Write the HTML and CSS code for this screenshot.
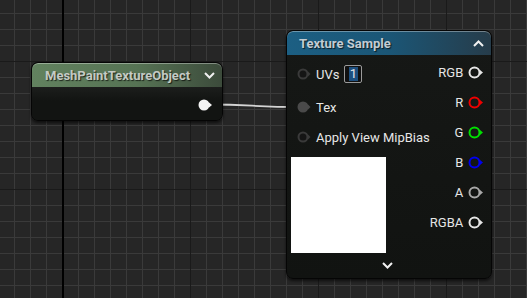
FILE: index.html
```html
<!DOCTYPE html>
<html>
<head>
<meta charset="utf-8">
<link rel="stylesheet" href="styles.css">
</head>
<body>
<div class="canvas">
  <svg class="wire" width="527" height="298" viewBox="0 0 527 298">
    <path d="M209 104.5 C 250 104.5, 255 107, 300 107" stroke="#d4d4d4" stroke-width="1.8" fill="none"/>
  </svg>

  <div class="node node-mesh">
    <div class="node-header header-green">
      <span class="title">MeshPaintTextureObject</span>
      <svg class="chev" width="11" height="7" viewBox="0 0 11 7"><path d="M1 1 L5.5 5.5 L10 1" stroke="#f0f0f0" stroke-width="2" fill="none"/></svg>
    </div>
    <div class="mesh-body">
      <svg class="pin" width="14" height="12" viewBox="0 0 14 12"><circle cx="6" cy="6" r="5.5" fill="#f4f4f4"/><path d="M11 3.5 L14 6 L11 8.5 Z" fill="#f4f4f4"/></svg>
    </div>
  </div>

  <div class="node node-tex">
    <div class="node-header header-blue">
      <span class="title">Texture Sample</span>
      <svg class="chev" width="11" height="7" viewBox="0 0 11 7"><path d="M1 6 L5.5 1.5 L10 6" stroke="#f0f0f0" stroke-width="2" fill="none"/></svg>
    </div>
    <div class="tex-body">
      <div class="inputs">
        <div class="in-row row-uv">
          <svg class="pin" width="14" height="12" viewBox="0 0 14 12"><circle cx="6" cy="6" r="4.5" fill="#151515" stroke="#3a3a3a" stroke-width="2"/><path d="M11 3.5 L13.5 6 L11 8.5 Z" fill="#3a3a3a"/></svg>
          <span class="label">UVs</span>
          <span class="num-box"><span class="sel">1</span></span>
        </div>
        <div class="in-row row-tex">
          <svg class="pin" width="14" height="12" viewBox="0 0 14 12"><circle cx="6" cy="6" r="5.5" fill="#4a4a4a"/><path d="M11 3.5 L13.5 6 L11 8.5 Z" fill="#4a4a4a"/></svg>
          <span class="label">Tex</span>
        </div>
        <div class="in-row row-mip">
          <svg class="pin" width="14" height="12" viewBox="0 0 14 12"><circle cx="6" cy="6" r="4.5" fill="#151515" stroke="#3a3a3a" stroke-width="2"/><path d="M11 3.5 L13.5 6 L11 8.5 Z" fill="#3a3a3a"/></svg>
          <span class="label">Apply View MipBias</span>
        </div>
        <div class="preview"></div>
      </div>
      <div class="outputs">
        <div class="out-row"><span class="label">RGB</span><svg class="pin" width="15" height="13" viewBox="0 0 15 13"><circle cx="6.5" cy="6.5" r="5" fill="none" stroke="#e6e6e6" stroke-width="2"/><path d="M12 4 L15 6.5 L12 9 Z" fill="#e6e6e6"/></svg></div>
        <div class="out-row"><span class="label">R</span><svg class="pin" width="15" height="13" viewBox="0 0 15 13"><circle cx="6.5" cy="6.5" r="5" fill="none" stroke="#f00000" stroke-width="2"/><path d="M12 4 L15 6.5 L12 9 Z" fill="#f00000"/></svg></div>
        <div class="out-row"><span class="label">G</span><svg class="pin" width="15" height="13" viewBox="0 0 15 13"><circle cx="6.5" cy="6.5" r="5" fill="none" stroke="#00e000" stroke-width="2"/><path d="M12 4 L15 6.5 L12 9 Z" fill="#00e000"/></svg></div>
        <div class="out-row"><span class="label">B</span><svg class="pin" width="15" height="13" viewBox="0 0 15 13"><circle cx="6.5" cy="6.5" r="5" fill="none" stroke="#0000f0" stroke-width="2"/><path d="M12 4 L15 6.5 L12 9 Z" fill="#0000f0"/></svg></div>
        <div class="out-row"><span class="label">A</span><svg class="pin" width="15" height="13" viewBox="0 0 15 13"><circle cx="6.5" cy="6.5" r="5" fill="none" stroke="#a8a8a8" stroke-width="2"/><path d="M12 4 L15 6.5 L12 9 Z" fill="#a8a8a8"/></svg></div>
        <div class="out-row"><span class="label">RGBA</span><svg class="pin" width="15" height="13" viewBox="0 0 15 13"><circle cx="6.5" cy="6.5" r="5" fill="none" stroke="#e6e6e6" stroke-width="2"/><path d="M12 4 L15 6.5 L12 9 Z" fill="#e6e6e6"/></svg></div>
      </div>
    </div>
    <div class="tex-foot">
      <svg class="chev" width="11" height="7" viewBox="0 0 11 7"><path d="M1 1 L5.5 5.5 L10 1" stroke="#f0f0f0" stroke-width="2" fill="none"/></svg>
    </div>
  </div>
</div>
</body>
</html>
```

FILE: styles.css
```css
html, body {
  margin: 0;
  padding: 0;
  background: #262626;
}

.canvas {
  position: relative;
  width: 527px;
  height: 298px;
  overflow: hidden;
  font-family: Roboto, "Liberation Sans", sans-serif;
  background-color: #262626;
  background-image:
    linear-gradient(to right, transparent 62px, #000 62px, #000 64px, transparent 64px),
    linear-gradient(to right, #1a1a1a 1px, transparent 1px),
    linear-gradient(to bottom, #1a1a1a 1px, transparent 1px),
    linear-gradient(to right, #3a3a3a 1px, transparent 1px),
    linear-gradient(to bottom, #3a3a3a 1px, transparent 1px);
  background-size:
    100% 100%,
    128px 100%,
    100% 128px,
    16px 100%,
    100% 16px;
  background-position:
    0 0,
    62px 0,
    0 61px,
    14px 0,
    0 13px;
}

.wire {
  position: absolute;
  left: 0;
  top: 0;
}

.node {
  position: absolute;
  box-sizing: border-box;
  border: 1px solid #050505;
  border-radius: 7px;
  background: linear-gradient(to bottom, #161816, #111311);
  box-shadow: 0 2px 3px rgba(0, 0, 0, 0.6);
  overflow: hidden;
}

.node-mesh {
  left: 31px;
  top: 62px;
  width: 192px;
  height: 59px;
}

.node-tex {
  left: 286px;
  top: 30px;
  width: 206px;
  height: 249px;
  display: flex;
  flex-direction: column;
}

.node-header {
  height: 24px;
  display: flex;
  align-items: center;
  justify-content: space-between;
  padding: 0 7px 0 13px;
  box-shadow: inset 0 1px 0 rgba(255, 255, 255, 0.35);
  border-radius: 6px 6px 0 0;
  flex: none;
}

.header-green {
  background: linear-gradient(to right, #62825f 0%, #567354 55%, #3c4b3b 100%);
}

.header-blue {
  background: linear-gradient(to right, #1c5f83 0%, #1b5676 50%, #263c4a 100%);
  padding-left: 12px;
}

.title {
  font-weight: bold;
  font-size: 13px;
  color: #c4cac4;
  text-shadow: 1px 1px 1px rgba(0, 0, 0, 0.7);
  white-space: nowrap;
}

.header-blue .title {
  color: #c3ccd3;
}

.chev {
  display: block;
}

.mesh-body {
  display: flex;
  justify-content: flex-end;
  padding: 12px 10px 0 0;
  background: linear-gradient(to bottom, #1c1e1c, #121412 40%);
  height: 34px;
  box-sizing: border-box;
}

.pin {
  display: block;
  flex: none;
}

.tex-body {
  display: flex;
  justify-content: space-between;
  flex: 1;
}

.inputs {
  display: flex;
  flex-direction: column;
  padding-left: 4px;
  flex: none;
}

.in-row {
  display: flex;
  align-items: center;
  height: 24px;
}

.in-row .pin {
  margin-left: 6px;
  margin-right: 5px;
}

.row-uv { margin-top: 7px; }
.row-tex { margin-top: 9px; }
.row-mip { margin-top: 6px; }

.label {
  font-size: 13px;
  color: #e6e6e6;
  white-space: nowrap;
}

.num-box {
  display: flex;
  align-items: center;
  justify-content: center;
  box-sizing: border-box;
  width: 18px;
  height: 18px;
  margin-left: 5px;
  border: 1px solid #9a9a9a;
  border-radius: 2px;
  background: #101010;
}

.sel {
  background: #1d4f7f;
  color: #e6e6e6;
  font-size: 13px;
  line-height: 14px;
  padding: 0 1px;
}

.preview {
  width: 95px;
  height: 96px;
  margin-top: 8px;
  background: #ffffff;
}

.outputs {
  display: flex;
  flex-direction: column;
  align-items: flex-end;
  padding-top: 2px;
  padding-right: 10px;
  flex: none;
}

.out-row {
  display: flex;
  align-items: center;
  height: 30px;
}

.out-row .pin {
  margin-left: 5px;
}

.tex-foot {
  display: flex;
  justify-content: center;
  padding: 0 0 9px 0;
  margin-left: -3px;
}
```
